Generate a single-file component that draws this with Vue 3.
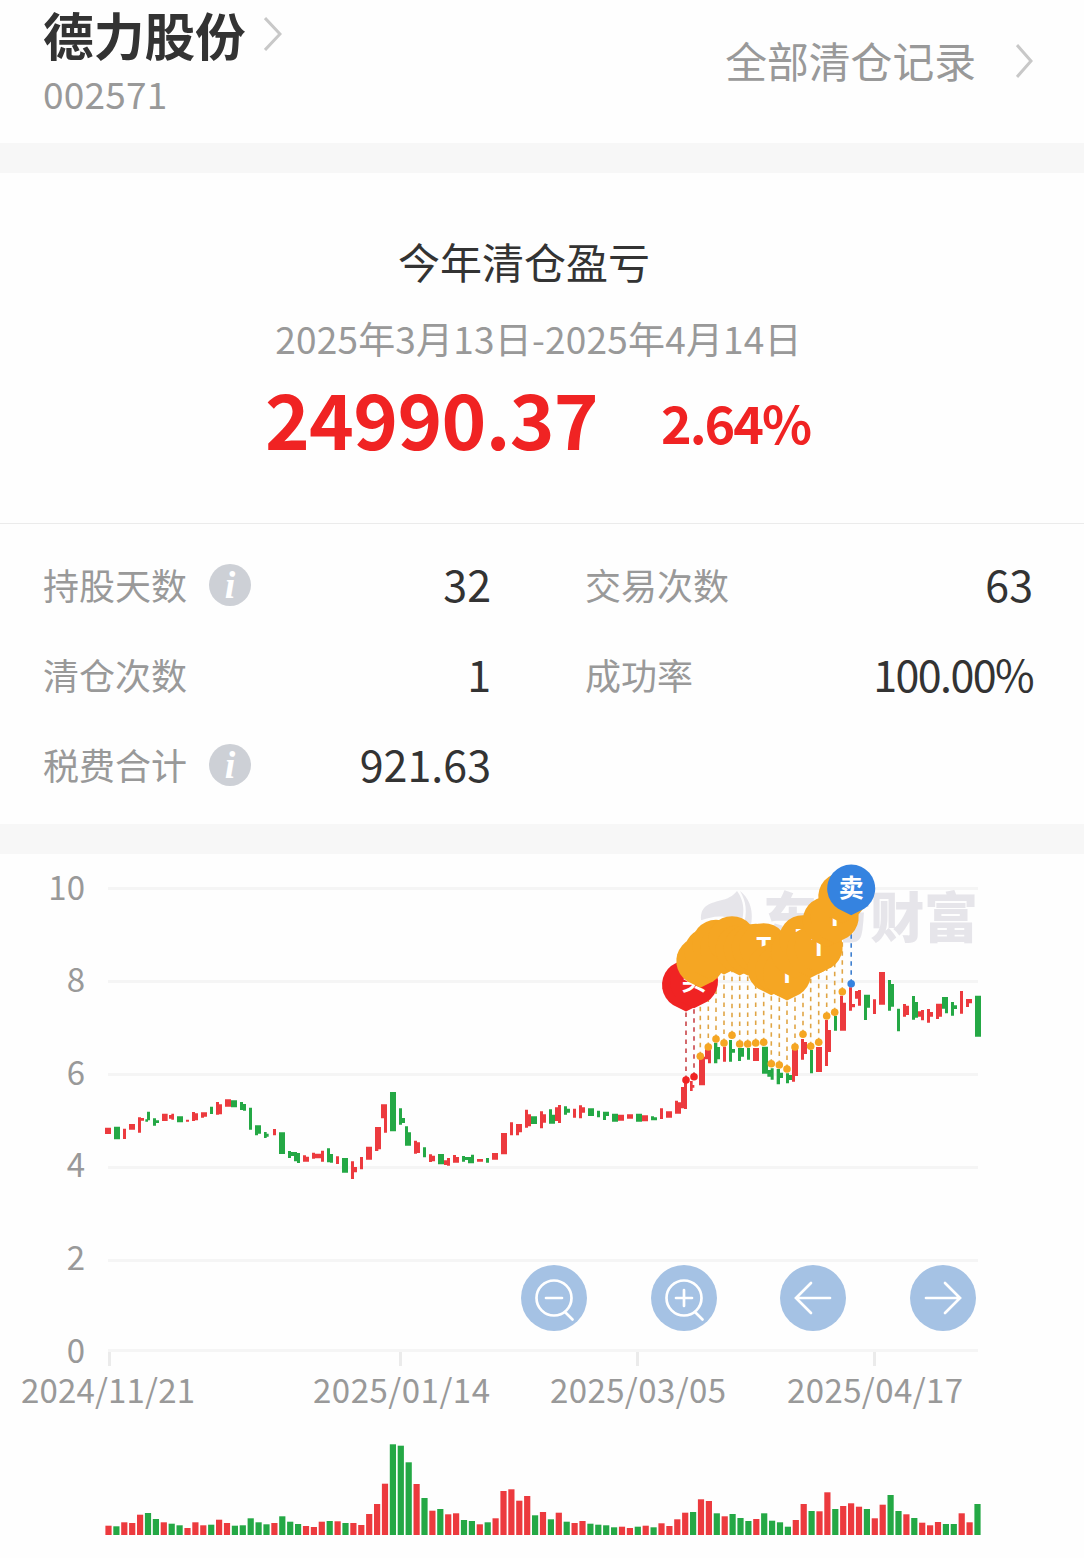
<template>
  <div class="page">
    <header class="header">
      <div class="stock">
        <div class="stock-name">
          <span class="name">德力股份</span>
          <svg class="arrow small" viewBox="0 0 18 34"><path d="M1 1 L16 17 L1 33" /></svg>
        </div>
        <div class="code">002571</div>
      </div>
      <div class="records">
        <span class="records-text">全部清仓记录</span>
        <svg class="arrow" viewBox="0 0 18 34"><path d="M1 1 L15 17 L1 33" /></svg>
      </div>
    </header>

    <section class="profit">
      <h2 class="title">今年清仓盈亏</h2>
      <div class="range">2025年3月13日-2025年4月14日</div>
      <div class="amount">
        <span class="money">24990.37</span>
        <span class="rate">2.64%</span>
      </div>
    </section>

    <section class="stats">
      <div v-for="item in stats" :key="item.label" class="stat">
        <span class="label">{{ item.label }}</span>
        <span v-if="item.info" class="info">i</span>
        <span class="value" :class="{ tight: item.tight }">{{ item.value }}</span>
      </div>
    </section>

    <section class="chart">
      <svg width="1084" height="704" viewBox="0 854 1084 704">
        <!-- 水印 -->
        <g class="watermark">
          <path d="M701 920 C700 904 712 903 722 900 C731 898 734 894 737 891 C746 903 744 917 740 926 C728 912 712 917 702 920 Z" />
          <path d="M740 891 C752 900 754 916 750 929 L743 927 C748 912 746 901 740 891 Z" />
          <text x="763" y="938" textLength="215">东方财富</text>
        </g>

        <!-- 坐标轴 -->
        <g v-for="g in grid" :key="g.label">
          <line class="grid" x1="108" x2="978" :y1="g.y" :y2="g.y" />
          <text class="axis" x="85" :y="g.base" text-anchor="end">{{ g.label }}</text>
        </g>
        <g v-for="d in dates" :key="d.text">
          <line class="tick" :x1="d.x" :x2="d.x" y1="1352" y2="1366" />
          <text class="axis" :x="d.left" y="1403" :textLength="d.width">{{ d.text }}</text>
        </g>

        <!-- K线 -->
        <g v-for="part in klines" :key="part.x + part.y" :transform="`translate(${part.x} ${part.y}) scale(0.33333)`">
          <path class="up" :d="toPath(part.up)" />
          <path class="down" :d="toPath(part.down)" />
        </g>

        <!-- 买卖点 -->
        <g v-for="p in points" :key="'l' + p.x" :class="p.type">
          <line class="dash" :x1="p.x" :x2="p.x" :y1="p.y" :y2="p.y - 70" />
          <circle class="dot" :cx="p.x" :cy="p.y" r="3.8" />
        </g>
        <g v-for="p in points" :key="'p' + p.x" :class="p.type" :transform="`translate(${p.x} ${p.y - 95})`">
          <path class="pin" d="M0 26.5 L-13 20 A24 24 0 1 1 13 20 Z" />
          <text v-if="p.text" class="pin-text" text-anchor="middle" y="8.5">{{ p.text }}</text>
        </g>

        <!-- 缩放与平移按钮 -->
        <g v-for="b in buttons" :key="b.x" class="tool" :transform="`translate(${b.x} 1298)`">
          <circle r="33" />
          <path :d="b.d" />
        </g>

        <!-- 成交量 -->
        <rect
          v-for="(v, i) in volumes"
          :key="i"
          :class="v.type"
          :x="105.4 + i * 7.9"
          :y="1535 - v.h"
          width="6.2"
          :height="v.h"
        />
      </svg>
    </section>
  </div>
</template>

<script setup>
const stats = [
  { label: '持股天数', value: '32', info: true },
  { label: '交易次数', value: '63' },
  { label: '清仓次数', value: '1' },
  { label: '成功率', value: '100.00%', tight: true },
  { label: '税费合计', value: '921.63', info: true }
]

const grid = [
  { label: '10', y: 888.5, base: 900 },
  { label: '8', y: 981.5, base: 992 },
  { label: '6', y: 1074.5, base: 1085 },
  { label: '4', y: 1167.5, base: 1177 },
  { label: '2', y: 1260.5, base: 1270 },
  { label: '0', y: 1350.5, base: 1363 }
]

const dates = [
  { text: '2024/11/21', x: 109.5, left: 21, width: 174 },
  { text: '2025/01/14', x: 400.5, left: 313, width: 177 },
  { text: '2025/03/05', x: 637.5, left: 550, width: 176 },
  { text: '2025/04/17', x: 874.5, left: 787, width: 176 }
]

// 每段为 左,上,右,下
const klines = [
  {
    x: 95,
    y: 1080,
    up: '30,143,48,162 84,146,93,177 102,132,120,149 129,112,138,158 138,114,147,122 201,101,218,123 222,105,229,116 229,101,237,119 273,119,282,125 291,96,300,123 300,100,309,121 318,97,336,110 318,97,327,113 363,66,372,104 372,73,381,103 390,58,408,80 534,147,543,166 624,226,633,245 633,230,642,245 651,218,660,236 660,221,678,235 678,212,687,245 723,229,732,252 768,244,777,297 777,261,786,277 795,231,804,268 813,200,831,239 840,141,858,208 840,205,850,213 858,73,876,115 867,73,876,158',
    down: '57,140,75,178 151,118,159,125 156,95,165,121 174,115,183,137 183,121,192,129 246,109,264,127 345,80,354,102 408,61,426,82 435,66,444,90 444,72,453,92 462,83,471,149 480,136,498,161 480,136,489,166 507,156,515,174 515,161,521,170 552,157,570,222 579,213,588,234 588,216,606,228 597,219,615,244 606,244,615,249 696,205,705,247 705,222,714,248 741,234,759,278 885,36,903,154'
  },
  {
    x: 380,
    y: 1080,
    up: '102,182,111,221 111,187,120,219 147,223,156,246 156,227,165,244 192,241,201,255 201,234,210,257 219,225,228,248 228,231,237,248 291,237,309,245 336,219,354,239 363,159,381,223 390,127,399,166 408,132,426,157 408,132,417,166 435,89,444,143 444,103,453,139 480,94,489,145 489,103,498,128 525,82,534,123 534,75,543,129 579,86,588,113 597,76,606,115 606,82,615,98 714,104,732,122 741,103,759,116 786,106,804,124 840,85,849,117 858,94,876,113 885,62,894,101 894,67,903,101',
    down: '57,85,66,134 66,114,75,129 75,139,84,197 84,157,93,197 129,202,138,232 174,222,192,253 246,228,255,245 255,231,273,240 264,234,282,250 273,224,282,250 318,234,327,248 453,109,471,132 507,88,516,131 516,104,525,131 552,79,561,104 561,86,570,98 624,85,642,108 651,92,660,112 669,95,687,108 669,95,678,120 696,101,714,125 768,101,786,125 813,109,822,121 822,112,831,121'
  },
  {
    x: 640,
    y: 850,
    up: '123,711,132,775 132,698,141,777 150,693,158,723 158,705,163,713 177,620,195,706 195,598,213,628 204,598,213,640 249,590,258,635 339,594,357,633 456,597,474,678 456,678,465,695 483,567,492,629 492,576,501,612 528,591,546,666 555,510,564,648 564,540,573,606 600,437,609,542 609,458,618,542 627,412,636,482 636,462,645,472 645,423,654,446 654,420,663,467 699,448,708,492 717,366,735,464 789,462,798,500 798,467,807,495 834,484,843,500 843,480,852,511 861,477,870,518 870,486,879,500 888,461,906,500 888,461,897,507 960,423,969,491 978,447,996,460 978,447,987,471',
    down: '222,578,232,640 232,591,240,628 267,570,276,635 276,597,285,608 294,594,312,620 294,594,303,633 321,594,330,629 366,590,384,671 382,660,392,680 392,655,401,689 410,657,420,703 420,668,429,684 438,670,447,700 447,675,456,690 510,600,519,670 582,498,591,542 672,434,690,473 672,434,681,510 744,390,753,482 753,402,762,470 771,476,780,544 816,438,825,509 825,456,834,503 906,441,924,476 915,441,924,490 933,456,942,497 942,466,951,477 1005,437,1023,560'
  }
]

const toPath = (str) =>
  str
    .split(' ')
    .map((s) => {
      const [l, t, r, b] = s.split(',')
      return `M${l} ${t}H${r}V${b}H${l}Z`
    })
    .join('')

// 重叠的标记只给露出来的写字
const points = [
  { type: 'buy', x: 686, y: 1080 },
  { type: 'buy', x: 694, y: 1076.7, text: '买' },
  { type: 'trade', x: 700.3, y: 1056.3 },
  { type: 'trade', x: 708.3, y: 1047 },
  { type: 'trade', x: 716, y: 1039 },
  { type: 'trade', x: 724, y: 1043 },
  { type: 'trade', x: 732, y: 1035.3 },
  { type: 'trade', x: 739.7, y: 1044 },
  { type: 'trade', x: 747.7, y: 1044 },
  { type: 'trade', x: 755.7, y: 1043 },
  { type: 'trade', x: 763.7, y: 1042.3, text: 'T' },
  { type: 'trade', x: 771.3, y: 1063.7 },
  { type: 'trade', x: 779.3, y: 1065 },
  { type: 'trade', x: 787, y: 1069, text: 'T' },
  { type: 'trade', x: 795, y: 1047 },
  { type: 'trade', x: 803, y: 1034.3, text: 'T' },
  { type: 'trade', x: 810.7, y: 1046.3 },
  { type: 'trade', x: 818.7, y: 1042.3, text: 'T' },
  { type: 'trade', x: 826.7, y: 1016 },
  { type: 'trade', x: 834.7, y: 1012.3, text: 'T' },
  { type: 'trade', x: 842.3, y: 991.7 },
  { type: 'sell', x: 851.2, y: 983.7, text: '卖' }
]

const lens = 'M17.5 0 A17.5 17.5 0 1 1 -17.5 0 A17.5 17.5 0 1 1 17.5 0 M11 14 L18.5 21.5 M-8 0 H8'
const buttons = [
  { x: 554, d: lens },
  { x: 684, d: lens + ' M0 -8 V8' },
  { x: 813, d: 'M17 0 H-16.5 M-2 -15 L-17 0 L-2 15' },
  { x: 943, d: 'M-17 0 H16.5 M2 -15 L17 0 L2 15' }
]

// r 涨 g 跌，数字为柱高
const volumes = (
  'r9.3 g8.7 r12.7 r12 r20.3 g22 g16 r12.7 g11.3 g9.7 r7 r12.7 r9.7 g10.3 r15.3 r12 g9.3 g9.7 g16.7 g12.7 ' +
  'g10.7 r12 g18.7 g13.3 g11 r9 r8 r13.3 g14 r13.7 g12 r12 r10 r21 r31 r51.3 g90.7 g89.3 g72.7 r51 ' +
  'g37 r24.3 g26 r20.7 r21.7 g15 g14 r10.7 g12.7 r16.7 r44 r45.7 r34.3 r39 g19.7 r23 g15.7 r22.3 g13.3 r12 ' +
  'r14 g11.3 g10.3 g9.7 g7.7 r8.3 r7 g8.3 r9.3 g7.7 r11.7 r9 r15.7 r22.3 g23 r35.7 r34 g21.7 r18.7 g21 ' +
  'g17 g14 r16 g21.7 g14.3 g12.7 g8.3 r15 r31 g24 r23.7 r42.7 g26 r29 r31.7 r28.3 g26 r16.7 r30.3 g40 ' +
  'g24 r20.7 g17 r12.3 r9.7 r13 g11 g11 r21.7 r12.7 g31'
)
  .split(' ')
  .map((s) => ({ type: s[0] === 'r' ? 'up' : 'down', h: Number(s.slice(1)) }))
</script>

<style>
body {
  background: #fff;
}
</style>

<style scoped>
.page {
  width: 1084px;
  height: 1558px;
  background: #fefefe;
  color: #333;
  font-family: 'Noto Sans CJK SC', sans-serif;
}

.header {
  display: flex;
  justify-content: space-between;
  box-sizing: border-box;
  height: 173px;
  padding: 4px 50px 0 43px;
  border-bottom: 30px solid #f7f7f7;
}

.stock-name {
  display: flex;
  align-items: center;
  gap: 18px;
  height: 60px;
}

.name {
  font-size: 50.7px;
  font-weight: 700;
  line-height: 60px;
}

.code {
  margin-top: 3px;
  font-size: 37px;
  line-height: 52px;
  letter-spacing: 0.2px;
  color: #999;
}

.arrow {
  width: 18px;
  height: 34px;
  fill: none;
  stroke: #c8c8c8;
  stroke-width: 3;
}

.records {
  display: flex;
  align-items: center;
  gap: 40px;
  height: 114px;
  font-size: 41.8px;
  color: #999;
}

.records-text {
  padding-bottom: 3px;
}

.profit {
  display: flex;
  flex-direction: column;
  align-items: center;
  box-sizing: border-box;
  height: 351px;
  padding-top: 58px;
  border-bottom: 1px solid #ebebeb;
}

.title {
  margin: 0;
  padding-right: 36px;
  font-size: 42px;
  font-weight: 400;
  line-height: 60px;
}

.range {
  margin-top: 20px;
  padding-right: 7px;
  font-size: 37px;
  line-height: 54px;
  letter-spacing: 0.2px;
  color: #999;
}

.amount {
  display: flex;
  align-items: flex-start;
  gap: 63px;
  margin-top: 2px;
  padding-right: 9px;
  font-weight: 700;
  line-height: 100px;
  color: #f02323;
}

.money {
  font-size: 76px;
  letter-spacing: -0.7px;
}

.rate {
  padding-top: 5px;
  font-size: 52px;
  letter-spacing: -2px;
}

.stats {
  display: grid;
  grid-template-columns: 448px 448px;
  grid-auto-rows: 90px;
  column-gap: 94px;
  box-sizing: border-box;
  height: 330px;
  padding: 16px 0 0 43px;
  border-bottom: 30px solid #f7f7f7;
}

.stat {
  display: flex;
  align-items: center;
}

.label {
  padding-bottom: 2px;
  font-size: 36px;
  color: #999;
}

.info {
  width: 42px;
  height: 42px;
  margin-left: 22px;
  border-radius: 50%;
  background: #cdd0d6;
  color: #fff;
  font: italic bold 38px/42px 'Liberation Serif', serif;
  text-align: center;
}

.value {
  margin-left: auto;
  padding-bottom: 4px;
  font-size: 43px;
}

.tight {
  letter-spacing: -1.6px;
}

.chart svg {
  display: block;
}

.watermark {
  fill: #e6e5ea;
  font-size: 54px;
  font-weight: 900;
}

.grid {
  stroke: #f5f5f5;
  stroke-width: 3;
}

.tick {
  stroke: #ebebeb;
  stroke-width: 3;
}

.axis {
  font-size: 33px;
  fill: #999;
}

.up {
  fill: #ec3a3e;
}

.down {
  fill: #24a845;
}

.dash {
  stroke-width: 1.6;
  stroke-dasharray: 4.5 4.5;
}

.buy {
  fill: #f02323;
  stroke: #c94448;
}

.trade {
  fill: #f5a623;
  stroke: #e0a545;
}

.sell {
  fill: #3583e0;
  stroke: #3f80d0;
}

.dot,
.pin,
.pin-text {
  stroke: none;
}

.pin-text {
  fill: #fff;
  font-size: 25px;
  font-weight: 700;
}

.tool circle {
  fill: #a5c2e4;
}

.tool path {
  fill: none;
  stroke: #fff;
  stroke-width: 2.7;
  stroke-linecap: round;
}
</style>
